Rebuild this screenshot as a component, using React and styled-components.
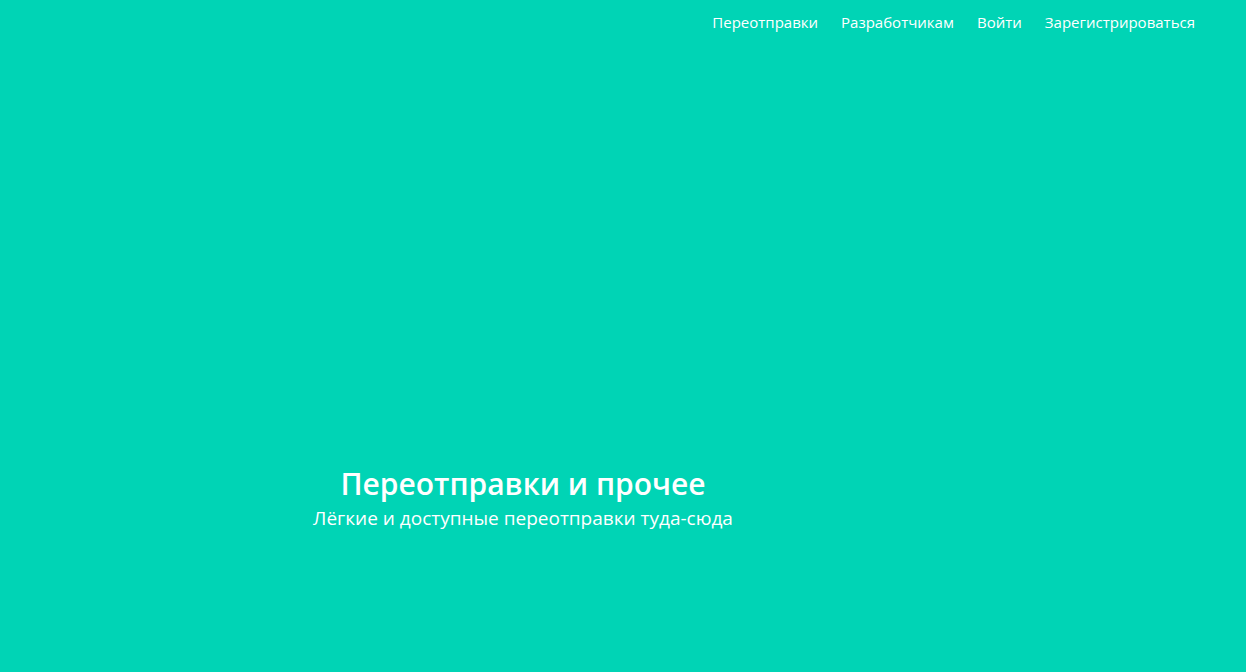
import React from "react";
import styled, { createGlobalStyle } from "styled-components";

const Global = createGlobalStyle`
  html, body { margin: 0; padding: 0; height: 100%; }
  body { background: #00d4b5; font-family: "Open Sans", "Noto Sans", sans-serif; color: #fff; }
  #root { min-height: 100vh; }
`;

const Page = styled.div`
  min-height: 672px;
  display: flex;
  flex-direction: column;
  background: #00d4b5;
`;

const Header = styled.header`
  display: flex;
  justify-content: flex-end;
  padding: 12px 51px 0 0;
`;

const Nav = styled.nav`
  display: flex;
  gap: 23px;
`;

const NavLink = styled.a`
  color: #fff;
  text-decoration: none;
  font-size: 15px;
  line-height: 20px;
`;

const Hero = styled.section`
  width: 1046px;
  display: flex;
  flex-direction: column;
  align-items: center;
  padding-top: 432px;
`;

const Title = styled.h1`
  margin: 0;
  font-size: 30px;
  font-weight: 600;
  line-height: 40px;
`;

const Subtitle = styled.p`
  margin: 0;
  font-size: 19px;
  line-height: 28px;
`;

export default function App() {
  return (
    <Page>
      <Global />
      <Header>
        <Nav>
          <NavLink href="#">Переотправки</NavLink>
          <NavLink href="#">Разработчикам</NavLink>
          <NavLink href="#">Войти</NavLink>
          <NavLink href="#">Зарегистрироваться</NavLink>
        </Nav>
      </Header>
      <Hero>
        <Title>Переотправки и прочее</Title>
        <Subtitle>Лёгкие и доступные переотправки туда-сюда</Subtitle>
      </Hero>
    </Page>
  );
}
